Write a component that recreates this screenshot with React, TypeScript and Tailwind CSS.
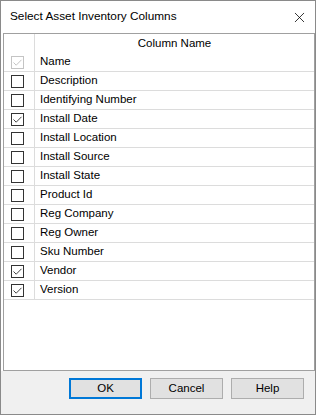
import { X } from 'lucide-react';

interface Column {
  name: string;
  checked: boolean;
  locked?: boolean;
}

const columns: Column[] = [
  { name: 'Name', checked: true, locked: true },
  { name: 'Description', checked: false },
  { name: 'Identifying Number', checked: false },
  { name: 'Install Date', checked: true },
  { name: 'Install Location', checked: false },
  { name: 'Install Source', checked: false },
  { name: 'Install State', checked: false },
  { name: 'Product Id', checked: false },
  { name: 'Reg Company', checked: false },
  { name: 'Reg Owner', checked: false },
  { name: 'Sku Number', checked: false },
  { name: 'Vendor', checked: true },
  { name: 'Version', checked: true },
];

const CheckBox = ({ checked, locked }: { checked: boolean; locked?: boolean }) => (
  <div
    className={`w-[13px] h-[13px] border bg-white flex items-center justify-center ${
      locked ? 'border-[#c4c4c4]' : 'border-[#333333]'
    }`}
  >
    {checked && (
      <svg width="11" height="11" viewBox="0 0 11 11">
        <path
          d="M1.5 5.5 L4.2 8.2 L9.5 2.8"
          fill="none"
          stroke={locked ? '#c4c4c4' : '#444444'}
          strokeWidth="1"
        />
      </svg>
    )}
  </div>
);

const Button = ({ label, primary }: { label: string; primary?: boolean }) => (
  <button
    className={`w-[73px] h-[21px] bg-[#e1e1e1] text-[11.5px] text-black flex items-center justify-center ${
      primary ? 'border-2 border-[#0078d7]' : 'border border-[#adadad]'
    }`}
  >
    {label}
  </button>
);

const App = () => {
  return (
    <div className="w-[318px] h-[415px] bg-white font-['Liberation_Sans',Arial,sans-serif] text-[11.5px] text-black">
      <div className="w-[316px] h-[415px] border border-[#8a8a8a] bg-[#f0f0f0] flex flex-col">
        <div className="h-[32px] bg-white flex items-center justify-between pl-[9px] pr-[7px]">
          <span className="text-[11.8px]">Select Asset Inventory Columns</span>
          <X size={17} strokeWidth={1.1} className="text-black" />
        </div>

        <div className="pl-[2px] bg-white">
          <div className="h-[338px] border border-[#a0a0a0] bg-white flex flex-col">
            <div className="h-[19px] flex">
              <div className="w-[31px] border-r border-[#dcdcdc]" />
              <div className="flex-1 flex items-center justify-center">Column Name</div>
            </div>
            {columns.map((col) => (
              <div key={col.name} className="h-[19px] flex border-b border-[#dcdcdc]">
                <div className="w-[31px] border-r border-[#dcdcdc] flex items-center pl-[7px]">
                  <CheckBox checked={col.checked} locked={col.locked} />
                </div>
                <div className="flex-1 flex items-center pl-[5px]">{col.name}</div>
              </div>
            ))}
          </div>
        </div>

        <div className="flex-1 flex justify-end gap-[8px] pt-[7px] pr-[11px]">
          <Button label="OK" primary />
          <Button label="Cancel" />
          <Button label="Help" />
        </div>
      </div>
    </div>
  );
};

export default App;
